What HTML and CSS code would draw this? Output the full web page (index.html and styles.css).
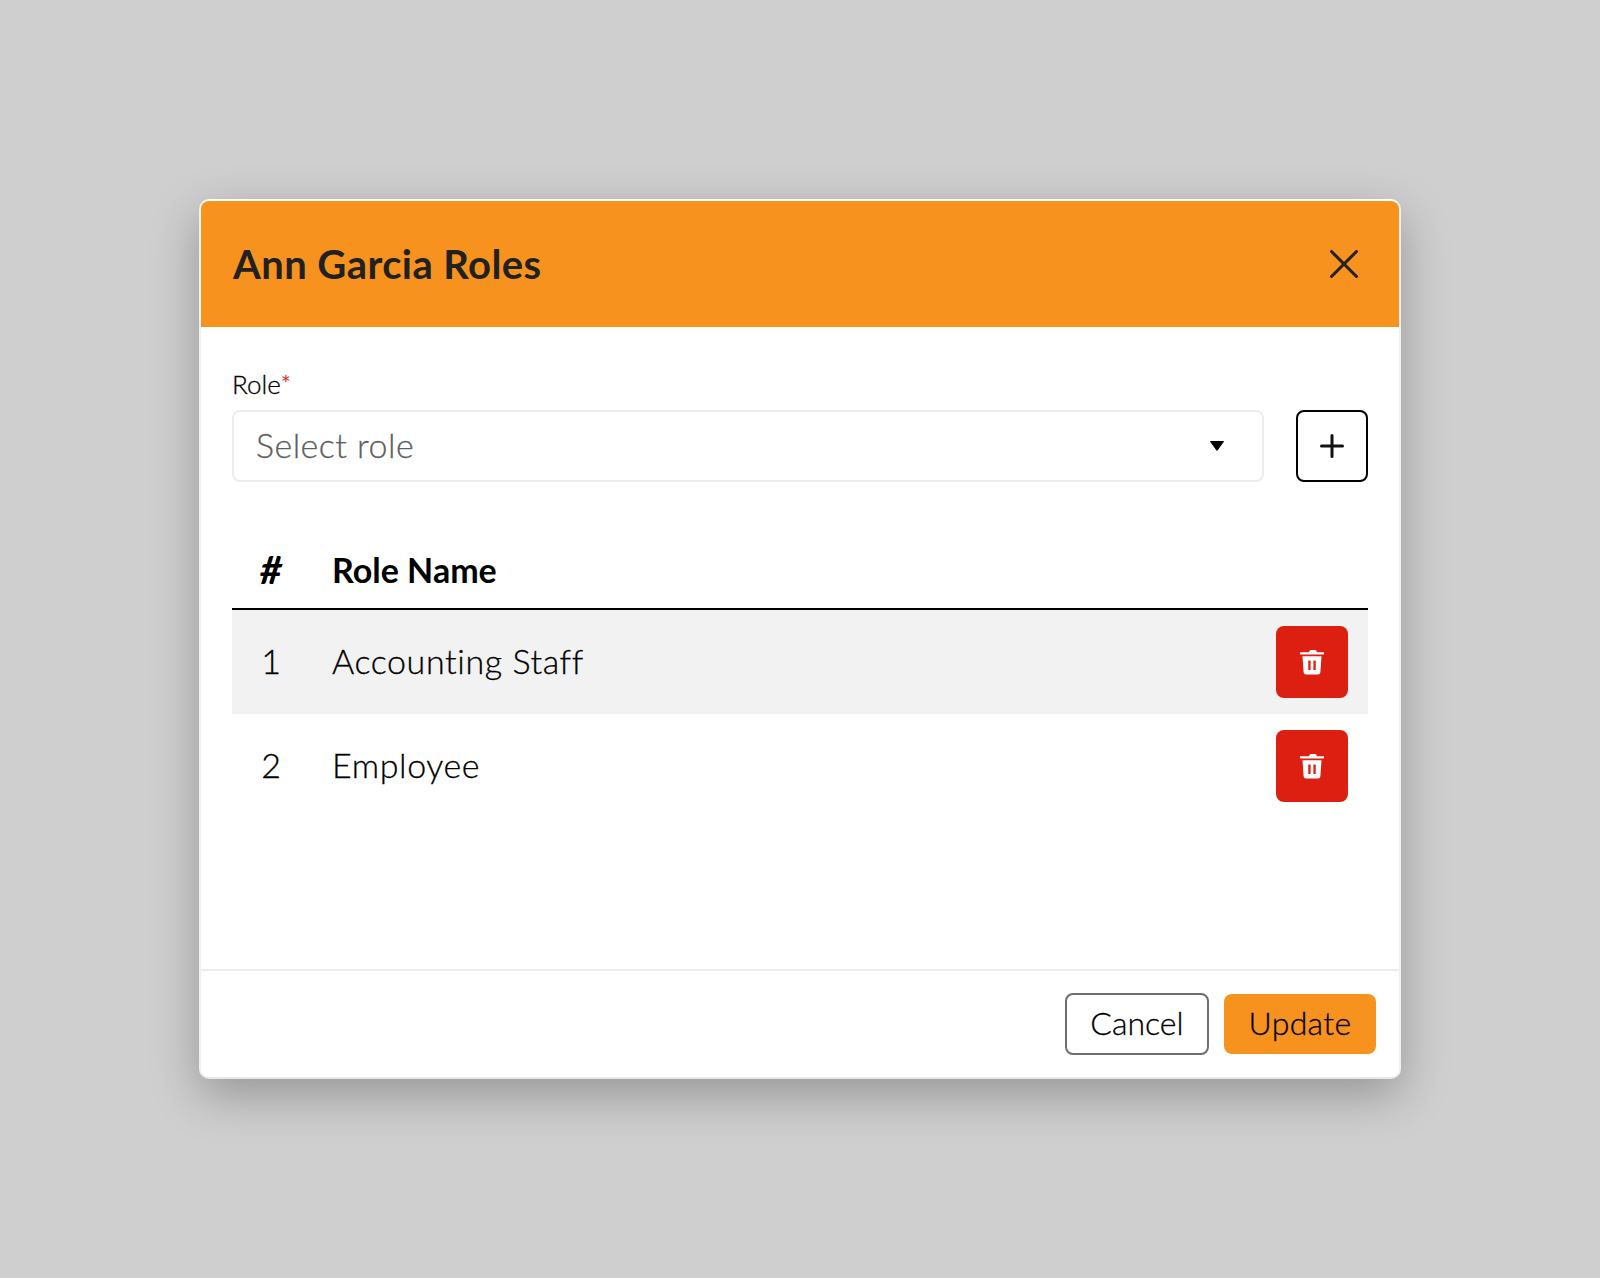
FILE: index.html
```html
<!DOCTYPE html>
<html lang="en">
<head>
<meta charset="utf-8">
<title>Ann Garcia Roles</title>
<link rel="stylesheet" href="styles.css">
</head>
<body>
<div class="modal">
  <header class="modal-header">
    <h1 class="modal-title">Ann Garcia Roles</h1>
    <svg class="close-icon" viewBox="0 0 28 28" width="28" height="28"><path d="M1.5 1.5 26.5 26.5M26.5 1.5 1.5 26.5"/></svg>
  </header>
  <div class="modal-body">
    <div class="role-label">Role<span class="req">*</span></div>
    <div class="role-row">
      <div class="select">
        <span class="placeholder">Select role</span>
        <svg class="caret" viewBox="0 0 16 12" width="16" height="12"><path d="M1.5 1.500h13L8 10.500z"/></svg>
      </div>
      <button class="add-btn"><svg viewBox="0 0 24 24" width="24" height="24"><path d="M12 1.500V22.500M1.500 12H22.500"/></svg></button>
    </div>
    <div class="table">
      <div class="thead">
        <div class="col-num col-hash">#</div>
        <div class="col-name">Role Name</div>
      </div>
      <div class="row row-alt">
        <div class="col-num">1</div>
        <div class="col-name">Accounting Staff</div>
        <button class="del-btn"><svg viewBox="0 0 24 26" width="24" height="26"><path d="M9 3.200 9.800 1.500Q10.100 1 10.800 1h4.400Q15.900 1 16.200 1.500L17 3.200h6.200Q24.500 3.200 24.500 4.300T23.200 5.400H.8Q-.500 5.400-.5 4.300T.8 3.200z"/><path fill-rule="evenodd" d="M2.500 7.200h19l-1.100 16Q20.200 25.500 18 25.500H6Q3.800 25.500 3.600 23.200zM8.300 11.500v9.500h2.300v-9.500zM13.400 11.500v9.500h2.300v-9.500z"/></svg></button>
      </div>
      <div class="row">
        <div class="col-num">2</div>
        <div class="col-name">Employee</div>
        <button class="del-btn"><svg viewBox="0 0 24 26" width="24" height="26"><path d="M9 3.200 9.800 1.500Q10.100 1 10.800 1h4.400Q15.900 1 16.200 1.500L17 3.200h6.200Q24.500 3.200 24.500 4.300T23.200 5.400H.8Q-.500 5.400-.5 4.300T.8 3.200z"/><path fill-rule="evenodd" d="M2.500 7.200h19l-1.100 16Q20.200 25.500 18 25.500H6Q3.800 25.500 3.600 23.200zM8.300 11.500v9.500h2.300v-9.500zM13.400 11.500v9.500h2.300v-9.500z"/></svg></button>
      </div>
    </div>
  </div>
  <footer class="modal-footer">
    <button class="btn btn-cancel">Cancel</button>
    <button class="btn btn-update">Update</button>
  </footer>
</div>
</body>
</html>
```
FILE: styles.css
```css
* { box-sizing: border-box; }
html, body { height: 100%; }
body {
  margin: 0;
  background: #cfcfcf;
  display: flex;
  align-items: center;
  justify-content: center;
  font-family: "Lato", "Liberation Sans", sans-serif;
  font-weight: 300;
  font-variant-ligatures: none;
  -webkit-text-stroke: 0.3px currentColor;
  color: #000;
}
.modal {
  width: 1202px;
  height: 880px;
  background: #fff;
  border: 2px solid #f0f0f0;
  border-top-color: #fff;
  border-bottom-color: #e8e8e8;
  border-radius: 10px;
  box-shadow: 0 16px 48px rgba(0, 0, 0, 0.28);
  display: flex;
  flex-direction: column;
  overflow: hidden;
}
.modal-header {
  height: 126px;
  flex: none;
  background: #f8921e;
  display: flex;
  align-items: center;
  justify-content: space-between;
  padding: 0 41px 0 32px;
}
.modal-title {
  margin: 0;
  font-size: 40px;
  letter-spacing: 0.42px;
  font-weight: 700;
  color: #212121;
  -webkit-text-stroke: 0;
}
.close-icon path { stroke: #212121; stroke-width: 3; stroke-linecap: round; fill: none; }
.modal-body {
  flex: 1;
  padding: 40px 31px 0 31px;
  margin-left: -1px;
}
.role-label {
  font-size: 26px;
  line-height: 34px;
  margin: 0 0 9px 1px;
}
.req { color: #e0201a; font-size: 24px; line-height: 0; vertical-align: 1px; }
.role-row {
  display: flex;
  gap: 32px;
  margin-left: 1px;
}
.select {
  flex: 1;
  height: 72px;
  border: 2px solid #ececec;
  border-radius: 8px;
  display: flex;
  align-items: center;
  justify-content: space-between;
  padding: 0 37px 0 22px;
}
.placeholder { font-size: 34px; letter-spacing: 0.45px; color: #5f5f5f; margin-bottom: 4px; }
.caret { fill: #000; stroke: #000; stroke-linejoin: round; }
.add-btn {
  width: 72px;
  height: 72px;
  background: #fff;
  border: 2px solid #000;
  border-radius: 8px;
  padding: 0;
  display: flex;
  align-items: center;
  justify-content: center;
}
.add-btn path { stroke: #111; stroke-width: 3; stroke-linecap: round; fill: none; }
.table { margin: 47px 0 0 1px; }
.thead {
  height: 81px;
  border-bottom: 2px solid #000;
  display: flex;
  align-items: center;
  font-size: 34px;
  font-weight: 700;
  -webkit-text-stroke: 0;
  padding-top: 1px;
}
.col-num { width: 78px; text-align: center; flex: none; }
.col-hash { font-size: 38px; font-style: italic; font-weight: 900; }
.col-name { flex: 1; padding-left: 22px; }
.row {
  height: 104px;
  display: flex;
  align-items: center;
  padding-right: 20px;
  font-size: 34px;
}
.row .col-name { letter-spacing: 0.6px; padding-bottom: 3px; }
.row .col-num { padding-bottom: 3px; }
.row-alt { background: #f2f2f2; }
.del-btn {
  width: 72px;
  height: 72px;
  background: #dc1f10;
  border: 0;
  border-radius: 8px;
  padding: 0;
  display: flex;
  align-items: center;
  justify-content: center;
}
.del-btn path { fill: #fff; }
.modal-footer {
  height: 108px;
  flex: none;
  border-top: 2px solid #ececec;
  display: flex;
  align-items: center;
  justify-content: flex-end;
  gap: 15px;
  padding: 0 23px 0 0;
}
.btn {
  height: 62px;
  border-radius: 8px;
  font-family: inherit;
  font-size: 32px;
  font-weight: 300;
  color: #000;
  padding: 0 0 4px;
}
.btn-cancel { width: 144px; background: #fff; border: 2px solid #6e6e6e; }
.btn-update { width: 152px; height: 60px; background: #f8921e; border: 0; letter-spacing: 0.3px; }
```
